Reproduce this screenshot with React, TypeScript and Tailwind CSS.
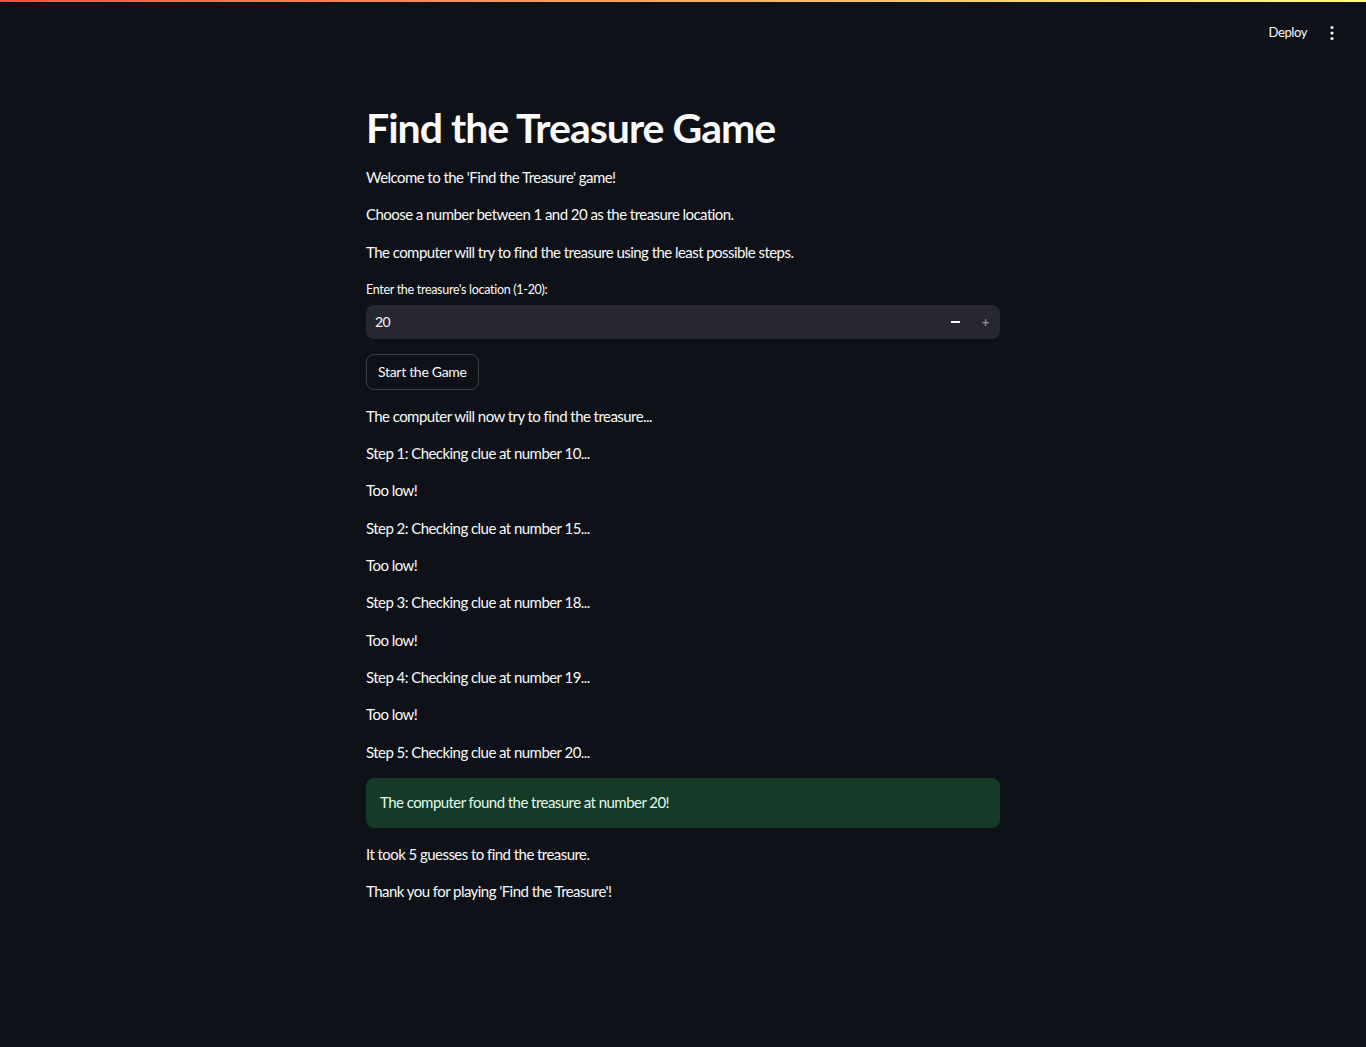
import { useState } from "react"

const steps = [10, 15, 18, 19, 20]

export default function App() {
    const [location] = useState(20)

    return (
        <div className="min-h-[1047px] bg-[#0e1117] text-[#fafafa] font-['Lato',sans-serif] relative">
            <div className="h-[2px] w-full bg-gradient-to-r from-[#ff4b4b] to-[#fffd80]" />

            {/* header */}
            <div className="flex justify-end items-center h-[62px] pr-[32px]">
                <span className="text-[13px] tracking-[-0.4px] mr-[23px]">Deploy</span>
                <svg width="4" height="16" viewBox="0 0 4 16" fill="#fafafa">
                    <circle cx="2" cy="2.5" r="1.6" />
                    <circle cx="2" cy="8" r="1.6" />
                    <circle cx="2" cy="13.5" r="1.6" />
                </svg>
            </div>

            <div className="w-[634px] mx-auto flex flex-col gap-4 pt-[38px] text-[15px] tracking-[-0.55px] leading-[21.3px]">
                <h1 className="text-[41px] font-bold leading-[52px] tracking-[-1px] -mb-[3px]">Find the Treasure Game</h1>
                <p>Welcome to the 'Find the Treasure' game!</p>
                <p>Choose a number between 1 and 20 as the treasure location.</p>
                <p>The computer will try to find the treasure using the least possible steps.</p>

                <div className="flex flex-col gap-[6px] mt-[2px]">
                    <label htmlFor="loc" className="text-[12.5px] leading-[18px] tracking-[-0.3px]">Enter the treasure's location (1-20):</label>
                    <div className="h-[34px] rounded-lg bg-[#262730] flex items-center pl-[9px] pr-[11px]">
                        <span id="loc" className="flex-1 text-[14px]">{location}</span>
                        <span className="w-[9px] h-[2px] bg-[#fafafa] mr-[21px]" />
                        <span className="text-[#8b8d98] text-[14px] font-bold leading-none">+</span>
                    </div>
                </div>

                <button className="self-start h-[36px] px-[11px] rounded-lg border border-[#fafafa33] text-[14px] tracking-[-0.3px] mt-[-1px]">Start the Game</button>

                <p>The computer will now try to find the treasure...</p>
                {steps.map((n, i) => (
                    <div key={n} className="flex flex-col gap-4">
                        <p>Step {i + 1}: Checking clue at number {n}...</p>
                        {n !== location && <p>Too low!</p>}
                    </div>
                ))}

                <div className="h-[50px] -mt-[1px] rounded-lg bg-[#173928] text-[#dffde9] flex items-center px-[14px]">
                    The computer found the treasure at number {location}!
                </div>
                <p>It took 5 guesses to find the treasure.</p>
                <p>Thank you for playing 'Find the Treasure'!</p>
            </div>
        </div>
    )
}
